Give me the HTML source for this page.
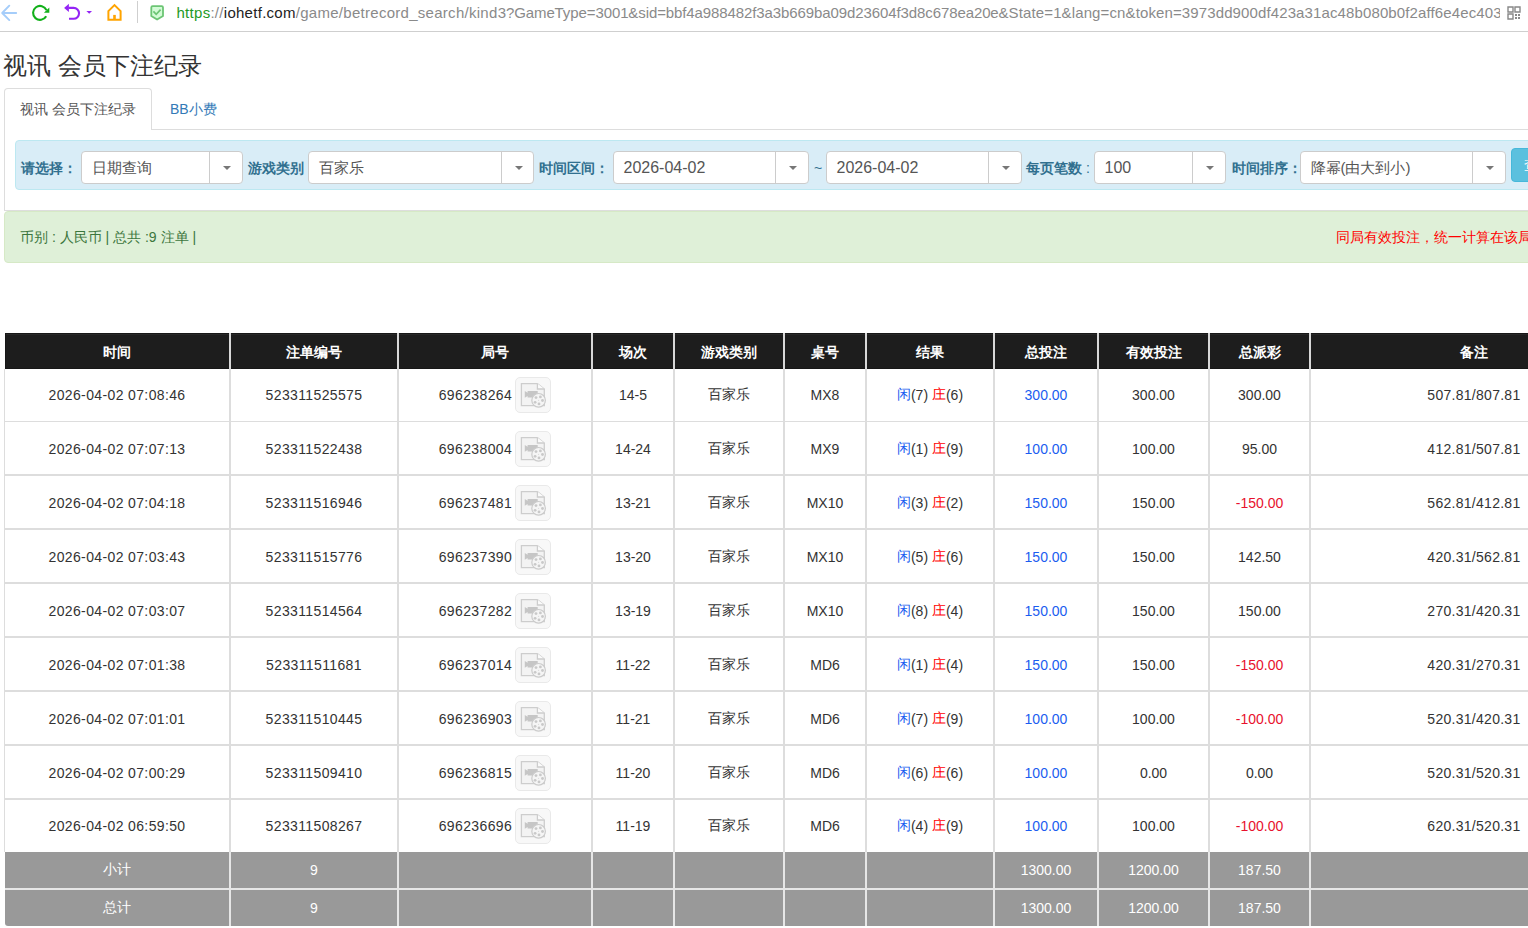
<!DOCTYPE html>
<html><head><meta charset="utf-8"><style>
*{margin:0;padding:0;box-sizing:border-box}
html,body{width:1528px;height:928px;overflow:hidden;background:#fff;font-family:"Liberation Sans",sans-serif;color:#333}
.a{position:absolute;white-space:nowrap}
.c{position:absolute;display:flex;align-items:center;font-size:14px;color:#333;white-space:nowrap}
.hd{color:#fff;font-weight:bold}
.num{letter-spacing:0.37px}
.sel{position:absolute;top:151px;height:33px;background:#fff;border:1px solid #ccc;border-radius:4px}
.sel .t{position:absolute;left:9.5px;top:0;height:31px;line-height:31px;font-size:16px;color:#555;white-space:nowrap}
.sel .sp{position:absolute;top:0;bottom:0;width:1px;background:#ccc}
.sel .cr{position:absolute;top:14px;width:0;height:0;border-left:4px solid transparent;border-right:4px solid transparent;border-top:4px solid #777}
.lb{position:absolute;top:158px;font-size:14px;font-weight:bold;color:#31708f;white-space:nowrap;line-height:20px}
.vl{position:absolute;width:2px;background:#ddd}
.hl{position:absolute;height:2px;background:#ddd}
.blue{color:#1b5df0}
.red{color:#f00}
.dred{color:#e8112d}
</style></head><body>

<div class="a" style="left:0;top:31px;width:1528px;height:1px;background:#cfcfcf"></div>
<svg class="a" style="left:0;top:0" width="175" height="31" viewBox="0 0 175 31">
 <path d="M16.2 13H2.4M9.3 5.7L2.2 13L9.3 20.1" fill="none" stroke="#a5cdfa" stroke-width="1.9" stroke-linecap="round" stroke-linejoin="round"/>
 <path d="M46.2 16.3A7 7 0 1 1 46.5 10.1" fill="none" stroke="#12b01a" stroke-width="2.1"/>
 <path d="M43.9 12.7H49.3V7.5Z" fill="#12b01a"/>
 <path d="M68.5 7.9H73.6A5.45 5.45 0 0 1 73.6 18.8H69" fill="none" stroke="#9424f5" stroke-width="2.1"/>
 <path d="M64.1 7.9L68.9 3.8V12Z" fill="#9424f5"/>
 <path d="M86.4 10.9H92L89.2 13.8Z" fill="#9424f5"/>
 <path d="M108.4 19.7V11.1L114.5 5.1L120.6 11.1V19.7Z" fill="none" stroke="#ffa400" stroke-width="2" stroke-linejoin="miter"/>
 <rect x="113.2" y="14.9" width="2.6" height="5" fill="#ffa400"/>
 <rect x="137" y="1" width="1" height="22" fill="#cfcfcf"/>
 <path d="M151.3 7.5Q151.3 6.2 152.6 6.2H161.7Q163 6.2 163 7.5V15.9L157.1 19.6L151.3 15.9Z" fill="#d3fbd6" stroke="#6cc574" stroke-width="1.8" stroke-linejoin="round"/>
 <path d="M153.4 11.3L156.2 14.3L160.6 9.6" fill="none" stroke="#6cc574" stroke-width="1.7"/>
</svg>
<div class="a" style="left:0;top:3px;width:1500px;height:22px;overflow:hidden;font-size:15px;line-height:20px;color:#8a8a8a"><span class="a" style="left:176.5px;top:0;letter-spacing:0.28px"><span style="color:#1f9a26">https</span>://<span style="color:#222">iohetf.com</span>/game/betrecord_search/kind</span><span class="a" style="left:497.7px;top:0;letter-spacing:-0.1px">3?GameType=3001&amp;sid=bbf4a988482f3a3b669ba09d23604f3d8c678ea20e</span><span class="a" style="left:998.5px;top:0;letter-spacing:0.12px">&amp;State=1&amp;lang=cn&amp;token=3973dd900df423a31ac48b080b0f2aff6e4ec403</span></div>
<svg class="a" style="left:1507px;top:6px" width="14" height="14" viewBox="0 0 14 14"><path d="M1 1h5v5h-5zM8 1h5v5h-5zM1 8h5v5h-5z" fill="none" stroke="#888" stroke-width="1.4"/><rect x="8" y="8" width="2" height="2" fill="#888"/><rect x="11" y="11" width="2" height="2" fill="#888"/><rect x="11" y="8" width="2" height="2" fill="#888"/><rect x="8" y="11" width="2" height="2" fill="#888"/></svg>

<div class="a" style="left:3px;top:49.5px;font-size:24px;line-height:32px;color:#333">视讯 会员下注纪录</div>
<div class="a" style="left:4px;top:88px;width:148px;height:42px;border:1px solid #ddd;border-bottom:none;border-radius:4px 4px 0 0;background:#fff"></div>
<div class="a" style="left:152px;top:129px;width:1376px;height:1px;background:#ddd"></div>
<div class="a" style="left:20px;top:99px;font-size:14px;line-height:20px;color:#555">视讯 会员下注纪录</div>
<div class="a" style="left:170px;top:99px;font-size:14px;line-height:20px;color:#337ab7">BB小费</div>
<div class="a" style="left:4px;top:130px;width:1px;height:81px;background:#ddd"></div>
<div class="a" style="left:4px;top:210px;width:1524px;height:1px;background:#ddd"></div>

<div class="a" style="left:15px;top:140px;width:1560px;height:50px;background:#d9edf7;border:1px solid #bce8f1;border-radius:4px"></div>
<div class="lb" style="left:21px">请选择：</div>
<div class="lb" style="left:248px">游戏类别</div>
<div class="lb" style="left:539px">时间区间：</div>
<div class="lb" style="left:1026px">每页笔数<span style="font-weight:normal"> :</span></div>
<div class="lb" style="left:1232px">时间排序：</div>
<div class="a" style="left:814px;top:158px;font-size:14px;line-height:20px;color:#31708f">~</div>
<div class="sel" style="left:81px;width:162px"><div class="t" style="font-size:15px">日期查询</div><div class="sp" style="left:127px"></div><div class="cr" style="left:141.0px"></div></div>
<div class="sel" style="left:308px;width:226px"><div class="t" style="font-size:15px">百家乐</div><div class="sp" style="left:192px"></div><div class="cr" style="left:205.5px"></div></div>
<div class="sel" style="left:613px;width:196px"><div class="t" style="font-size:16px">2026-04-02</div><div class="sp" style="left:161px"></div><div class="cr" style="left:175.0px"></div></div>
<div class="sel" style="left:826px;width:196px"><div class="t" style="font-size:16px">2026-04-02</div><div class="sp" style="left:161px"></div><div class="cr" style="left:175.0px"></div></div>
<div class="sel" style="left:1094px;width:132px"><div class="t" style="font-size:16px">100</div><div class="sp" style="left:97px"></div><div class="cr" style="left:111.0px"></div></div>
<div class="sel" style="left:1300px;width:206px"><div class="t" style="font-size:15px">降幂(由大到小)</div><div class="sp" style="left:171px"></div><div class="cr" style="left:185.0px"></div></div>
<div class="a" style="left:1511px;top:148px;width:60px;height:34px;background:#5bc0de;border:1px solid #46b8da;border-radius:4px"><span style="position:absolute;left:12px;top:6px;font-size:14px;line-height:20px;color:#fff">查询</span></div>
<div class="a" style="left:4px;top:211px;width:1560px;height:52px;background:#dff0d8;border:1px solid #d6e9c6;border-radius:4px"></div>
<div class="a" style="left:20px;top:227px;font-size:14px;line-height:20px;color:#3c763d">币别 : 人民币 | 总共 :9 注单 |</div>
<div class="a" style="left:1336px;top:227px;font-size:14px;line-height:20px;color:#f00">同局有效投注，统一计算在该局</div>
<div class="a" style="left:5px;top:333px;width:1600px;height:36px;background:#1d1d1d;box-shadow:inset 0 1px 0 #171717,inset 1px 0 0 #171717,inset 0 -1px 0 #171717,inset 0 2px 0 #282828"></div>
<div class="c hd" style="left:5px;top:334.5px;width:224px;height:36px;justify-content:center">时间</div>
<div class="c hd" style="left:231px;top:334.5px;width:166px;height:36px;justify-content:center">注单编号</div>
<div class="c hd" style="left:399px;top:334.5px;width:192px;height:36px;justify-content:center">局号</div>
<div class="c hd" style="left:593px;top:334.5px;width:80px;height:36px;justify-content:center">场次</div>
<div class="c hd" style="left:675px;top:334.5px;width:108px;height:36px;justify-content:center">游戏类别</div>
<div class="c hd" style="left:785px;top:334.5px;width:80px;height:36px;justify-content:center">桌号</div>
<div class="c hd" style="left:867px;top:334.5px;width:126px;height:36px;justify-content:center">结果</div>
<div class="c hd" style="left:995px;top:334.5px;width:102px;height:36px;justify-content:center">总投注</div>
<div class="c hd" style="left:1099px;top:334.5px;width:109px;height:36px;justify-content:center">有效投注</div>
<div class="c hd" style="left:1210px;top:334.5px;width:99px;height:36px;justify-content:center">总派彩</div>
<div class="c hd" style="left:1311px;top:334.5px;width:325px;height:36px;justify-content:center">备注</div>
<div class="vl" style="left:229px;top:333px;height:36px;background:#d8d8d8"></div>
<div class="vl" style="left:397px;top:333px;height:36px;background:#d8d8d8"></div>
<div class="vl" style="left:591px;top:333px;height:36px;background:#d8d8d8"></div>
<div class="vl" style="left:673px;top:333px;height:36px;background:#d8d8d8"></div>
<div class="vl" style="left:783px;top:333px;height:36px;background:#d8d8d8"></div>
<div class="vl" style="left:865px;top:333px;height:36px;background:#d8d8d8"></div>
<div class="vl" style="left:993px;top:333px;height:36px;background:#d8d8d8"></div>
<div class="vl" style="left:1097px;top:333px;height:36px;background:#d8d8d8"></div>
<div class="vl" style="left:1208px;top:333px;height:36px;background:#d8d8d8"></div>
<div class="vl" style="left:1309px;top:333px;height:36px;background:#d8d8d8"></div>
<div class="c " style="left:5px;top:369px;width:224px;height:52px;justify-content:center"><span class="num">2026-04-02 07:08:46</span></div>
<div class="c " style="left:231px;top:369px;width:166px;height:52px;justify-content:center"><span class="num">523311525575</span></div>
<div class="c " style="left:399px;top:369px;width:192px;height:52px;justify-content:center"><span class="num" style="margin-right:3.2px">696238264</span><svg width="36" height="36" viewBox="0 0 36 36" style="flex:none"><rect x="0.5" y="0.5" width="35" height="35" rx="4.5" fill="#f8f8f8" stroke="#e9e9e9"/><path d="M6.4 6.6H22.4L29.3 12V28.6H6.4Z" fill="#f3f3f3" stroke="#cdcdcd" stroke-width="1.3"/><path d="M22.4 6.6V12H29.3" fill="#fbfbfb" stroke="#cdcdcd" stroke-width="1.3"/><path d="M9.8 14L12.6 15.7V14H22.7V20.5H12.6V18.9L9.8 20.7Z" fill="#c6c6c6"/><circle cx="23.6" cy="23.3" r="6.8" fill="#f5f5f5" stroke="#cbcbcb" stroke-width="1.2"/><circle cx="21" cy="20.6" r="1.4" fill="#c9c9c9"/><circle cx="25.4" cy="19.9" r="1.4" fill="#c9c9c9"/><circle cx="27.5" cy="23.5" r="1.4" fill="#c9c9c9"/><circle cx="24" cy="26.9" r="1.4" fill="#c9c9c9"/><circle cx="20.1" cy="25.3" r="1.4" fill="#c9c9c9"/><circle cx="23.6" cy="23.3" r="0.5" fill="#d0d0d0"/></svg></div>
<div class="c " style="left:593px;top:369px;width:80px;height:52px;justify-content:center">14-5</div>
<div class="c " style="left:675px;top:369px;width:108px;height:52px;justify-content:center">百家乐</div>
<div class="c " style="left:785px;top:369px;width:80px;height:52px;justify-content:center">MX8</div>
<div class="c " style="left:867px;top:369px;width:126px;height:52px;justify-content:center"><span class="blue">闲</span>(7)&nbsp;<span class="red">庄</span>(6)</div>
<div class="c " style="left:995px;top:369px;width:102px;height:52px;justify-content:center"><span class="blue">300.00</span></div>
<div class="c " style="left:1099px;top:369px;width:109px;height:52px;justify-content:center">300.00</div>
<div class="c " style="left:1210px;top:369px;width:99px;height:52px;justify-content:center"><span class="">300.00</span></div>
<div class="c" style="left:1311px;top:369px;width:209.5px;height:52px;justify-content:flex-end"><span style="letter-spacing:0.28px">507.81/807.81</span></div>
<div class="c " style="left:5px;top:422px;width:224px;height:53px;justify-content:center"><span class="num">2026-04-02 07:07:13</span></div>
<div class="c " style="left:231px;top:422px;width:166px;height:53px;justify-content:center"><span class="num">523311522438</span></div>
<div class="c " style="left:399px;top:422px;width:192px;height:53px;justify-content:center"><span class="num" style="margin-right:3.2px">696238004</span><svg width="36" height="36" viewBox="0 0 36 36" style="flex:none"><rect x="0.5" y="0.5" width="35" height="35" rx="4.5" fill="#f8f8f8" stroke="#e9e9e9"/><path d="M6.4 6.6H22.4L29.3 12V28.6H6.4Z" fill="#f3f3f3" stroke="#cdcdcd" stroke-width="1.3"/><path d="M22.4 6.6V12H29.3" fill="#fbfbfb" stroke="#cdcdcd" stroke-width="1.3"/><path d="M9.8 14L12.6 15.7V14H22.7V20.5H12.6V18.9L9.8 20.7Z" fill="#c6c6c6"/><circle cx="23.6" cy="23.3" r="6.8" fill="#f5f5f5" stroke="#cbcbcb" stroke-width="1.2"/><circle cx="21" cy="20.6" r="1.4" fill="#c9c9c9"/><circle cx="25.4" cy="19.9" r="1.4" fill="#c9c9c9"/><circle cx="27.5" cy="23.5" r="1.4" fill="#c9c9c9"/><circle cx="24" cy="26.9" r="1.4" fill="#c9c9c9"/><circle cx="20.1" cy="25.3" r="1.4" fill="#c9c9c9"/><circle cx="23.6" cy="23.3" r="0.5" fill="#d0d0d0"/></svg></div>
<div class="c " style="left:593px;top:422px;width:80px;height:53px;justify-content:center">14-24</div>
<div class="c " style="left:675px;top:422px;width:108px;height:53px;justify-content:center">百家乐</div>
<div class="c " style="left:785px;top:422px;width:80px;height:53px;justify-content:center">MX9</div>
<div class="c " style="left:867px;top:422px;width:126px;height:53px;justify-content:center"><span class="blue">闲</span>(1)&nbsp;<span class="red">庄</span>(9)</div>
<div class="c " style="left:995px;top:422px;width:102px;height:53px;justify-content:center"><span class="blue">100.00</span></div>
<div class="c " style="left:1099px;top:422px;width:109px;height:53px;justify-content:center">100.00</div>
<div class="c " style="left:1210px;top:422px;width:99px;height:53px;justify-content:center"><span class="">95.00</span></div>
<div class="c" style="left:1311px;top:422px;width:209.5px;height:53px;justify-content:flex-end"><span style="letter-spacing:0.28px">412.81/507.81</span></div>
<div class="c " style="left:5px;top:476px;width:224px;height:53px;justify-content:center"><span class="num">2026-04-02 07:04:18</span></div>
<div class="c " style="left:231px;top:476px;width:166px;height:53px;justify-content:center"><span class="num">523311516946</span></div>
<div class="c " style="left:399px;top:476px;width:192px;height:53px;justify-content:center"><span class="num" style="margin-right:3.2px">696237481</span><svg width="36" height="36" viewBox="0 0 36 36" style="flex:none"><rect x="0.5" y="0.5" width="35" height="35" rx="4.5" fill="#f8f8f8" stroke="#e9e9e9"/><path d="M6.4 6.6H22.4L29.3 12V28.6H6.4Z" fill="#f3f3f3" stroke="#cdcdcd" stroke-width="1.3"/><path d="M22.4 6.6V12H29.3" fill="#fbfbfb" stroke="#cdcdcd" stroke-width="1.3"/><path d="M9.8 14L12.6 15.7V14H22.7V20.5H12.6V18.9L9.8 20.7Z" fill="#c6c6c6"/><circle cx="23.6" cy="23.3" r="6.8" fill="#f5f5f5" stroke="#cbcbcb" stroke-width="1.2"/><circle cx="21" cy="20.6" r="1.4" fill="#c9c9c9"/><circle cx="25.4" cy="19.9" r="1.4" fill="#c9c9c9"/><circle cx="27.5" cy="23.5" r="1.4" fill="#c9c9c9"/><circle cx="24" cy="26.9" r="1.4" fill="#c9c9c9"/><circle cx="20.1" cy="25.3" r="1.4" fill="#c9c9c9"/><circle cx="23.6" cy="23.3" r="0.5" fill="#d0d0d0"/></svg></div>
<div class="c " style="left:593px;top:476px;width:80px;height:53px;justify-content:center">13-21</div>
<div class="c " style="left:675px;top:476px;width:108px;height:53px;justify-content:center">百家乐</div>
<div class="c " style="left:785px;top:476px;width:80px;height:53px;justify-content:center">MX10</div>
<div class="c " style="left:867px;top:476px;width:126px;height:53px;justify-content:center"><span class="blue">闲</span>(3)&nbsp;<span class="red">庄</span>(2)</div>
<div class="c " style="left:995px;top:476px;width:102px;height:53px;justify-content:center"><span class="blue">150.00</span></div>
<div class="c " style="left:1099px;top:476px;width:109px;height:53px;justify-content:center">150.00</div>
<div class="c " style="left:1210px;top:476px;width:99px;height:53px;justify-content:center"><span class="dred">-150.00</span></div>
<div class="c" style="left:1311px;top:476px;width:209.5px;height:53px;justify-content:flex-end"><span style="letter-spacing:0.28px">562.81/412.81</span></div>
<div class="c " style="left:5px;top:530px;width:224px;height:53px;justify-content:center"><span class="num">2026-04-02 07:03:43</span></div>
<div class="c " style="left:231px;top:530px;width:166px;height:53px;justify-content:center"><span class="num">523311515776</span></div>
<div class="c " style="left:399px;top:530px;width:192px;height:53px;justify-content:center"><span class="num" style="margin-right:3.2px">696237390</span><svg width="36" height="36" viewBox="0 0 36 36" style="flex:none"><rect x="0.5" y="0.5" width="35" height="35" rx="4.5" fill="#f8f8f8" stroke="#e9e9e9"/><path d="M6.4 6.6H22.4L29.3 12V28.6H6.4Z" fill="#f3f3f3" stroke="#cdcdcd" stroke-width="1.3"/><path d="M22.4 6.6V12H29.3" fill="#fbfbfb" stroke="#cdcdcd" stroke-width="1.3"/><path d="M9.8 14L12.6 15.7V14H22.7V20.5H12.6V18.9L9.8 20.7Z" fill="#c6c6c6"/><circle cx="23.6" cy="23.3" r="6.8" fill="#f5f5f5" stroke="#cbcbcb" stroke-width="1.2"/><circle cx="21" cy="20.6" r="1.4" fill="#c9c9c9"/><circle cx="25.4" cy="19.9" r="1.4" fill="#c9c9c9"/><circle cx="27.5" cy="23.5" r="1.4" fill="#c9c9c9"/><circle cx="24" cy="26.9" r="1.4" fill="#c9c9c9"/><circle cx="20.1" cy="25.3" r="1.4" fill="#c9c9c9"/><circle cx="23.6" cy="23.3" r="0.5" fill="#d0d0d0"/></svg></div>
<div class="c " style="left:593px;top:530px;width:80px;height:53px;justify-content:center">13-20</div>
<div class="c " style="left:675px;top:530px;width:108px;height:53px;justify-content:center">百家乐</div>
<div class="c " style="left:785px;top:530px;width:80px;height:53px;justify-content:center">MX10</div>
<div class="c " style="left:867px;top:530px;width:126px;height:53px;justify-content:center"><span class="blue">闲</span>(5)&nbsp;<span class="red">庄</span>(6)</div>
<div class="c " style="left:995px;top:530px;width:102px;height:53px;justify-content:center"><span class="blue">150.00</span></div>
<div class="c " style="left:1099px;top:530px;width:109px;height:53px;justify-content:center">150.00</div>
<div class="c " style="left:1210px;top:530px;width:99px;height:53px;justify-content:center"><span class="">142.50</span></div>
<div class="c" style="left:1311px;top:530px;width:209.5px;height:53px;justify-content:flex-end"><span style="letter-spacing:0.28px">420.31/562.81</span></div>
<div class="c " style="left:5px;top:584px;width:224px;height:53px;justify-content:center"><span class="num">2026-04-02 07:03:07</span></div>
<div class="c " style="left:231px;top:584px;width:166px;height:53px;justify-content:center"><span class="num">523311514564</span></div>
<div class="c " style="left:399px;top:584px;width:192px;height:53px;justify-content:center"><span class="num" style="margin-right:3.2px">696237282</span><svg width="36" height="36" viewBox="0 0 36 36" style="flex:none"><rect x="0.5" y="0.5" width="35" height="35" rx="4.5" fill="#f8f8f8" stroke="#e9e9e9"/><path d="M6.4 6.6H22.4L29.3 12V28.6H6.4Z" fill="#f3f3f3" stroke="#cdcdcd" stroke-width="1.3"/><path d="M22.4 6.6V12H29.3" fill="#fbfbfb" stroke="#cdcdcd" stroke-width="1.3"/><path d="M9.8 14L12.6 15.7V14H22.7V20.5H12.6V18.9L9.8 20.7Z" fill="#c6c6c6"/><circle cx="23.6" cy="23.3" r="6.8" fill="#f5f5f5" stroke="#cbcbcb" stroke-width="1.2"/><circle cx="21" cy="20.6" r="1.4" fill="#c9c9c9"/><circle cx="25.4" cy="19.9" r="1.4" fill="#c9c9c9"/><circle cx="27.5" cy="23.5" r="1.4" fill="#c9c9c9"/><circle cx="24" cy="26.9" r="1.4" fill="#c9c9c9"/><circle cx="20.1" cy="25.3" r="1.4" fill="#c9c9c9"/><circle cx="23.6" cy="23.3" r="0.5" fill="#d0d0d0"/></svg></div>
<div class="c " style="left:593px;top:584px;width:80px;height:53px;justify-content:center">13-19</div>
<div class="c " style="left:675px;top:584px;width:108px;height:53px;justify-content:center">百家乐</div>
<div class="c " style="left:785px;top:584px;width:80px;height:53px;justify-content:center">MX10</div>
<div class="c " style="left:867px;top:584px;width:126px;height:53px;justify-content:center"><span class="blue">闲</span>(8)&nbsp;<span class="red">庄</span>(4)</div>
<div class="c " style="left:995px;top:584px;width:102px;height:53px;justify-content:center"><span class="blue">150.00</span></div>
<div class="c " style="left:1099px;top:584px;width:109px;height:53px;justify-content:center">150.00</div>
<div class="c " style="left:1210px;top:584px;width:99px;height:53px;justify-content:center"><span class="">150.00</span></div>
<div class="c" style="left:1311px;top:584px;width:209.5px;height:53px;justify-content:flex-end"><span style="letter-spacing:0.28px">270.31/420.31</span></div>
<div class="c " style="left:5px;top:638px;width:224px;height:53px;justify-content:center"><span class="num">2026-04-02 07:01:38</span></div>
<div class="c " style="left:231px;top:638px;width:166px;height:53px;justify-content:center"><span class="num">523311511681</span></div>
<div class="c " style="left:399px;top:638px;width:192px;height:53px;justify-content:center"><span class="num" style="margin-right:3.2px">696237014</span><svg width="36" height="36" viewBox="0 0 36 36" style="flex:none"><rect x="0.5" y="0.5" width="35" height="35" rx="4.5" fill="#f8f8f8" stroke="#e9e9e9"/><path d="M6.4 6.6H22.4L29.3 12V28.6H6.4Z" fill="#f3f3f3" stroke="#cdcdcd" stroke-width="1.3"/><path d="M22.4 6.6V12H29.3" fill="#fbfbfb" stroke="#cdcdcd" stroke-width="1.3"/><path d="M9.8 14L12.6 15.7V14H22.7V20.5H12.6V18.9L9.8 20.7Z" fill="#c6c6c6"/><circle cx="23.6" cy="23.3" r="6.8" fill="#f5f5f5" stroke="#cbcbcb" stroke-width="1.2"/><circle cx="21" cy="20.6" r="1.4" fill="#c9c9c9"/><circle cx="25.4" cy="19.9" r="1.4" fill="#c9c9c9"/><circle cx="27.5" cy="23.5" r="1.4" fill="#c9c9c9"/><circle cx="24" cy="26.9" r="1.4" fill="#c9c9c9"/><circle cx="20.1" cy="25.3" r="1.4" fill="#c9c9c9"/><circle cx="23.6" cy="23.3" r="0.5" fill="#d0d0d0"/></svg></div>
<div class="c " style="left:593px;top:638px;width:80px;height:53px;justify-content:center">11-22</div>
<div class="c " style="left:675px;top:638px;width:108px;height:53px;justify-content:center">百家乐</div>
<div class="c " style="left:785px;top:638px;width:80px;height:53px;justify-content:center">MD6</div>
<div class="c " style="left:867px;top:638px;width:126px;height:53px;justify-content:center"><span class="blue">闲</span>(1)&nbsp;<span class="red">庄</span>(4)</div>
<div class="c " style="left:995px;top:638px;width:102px;height:53px;justify-content:center"><span class="blue">150.00</span></div>
<div class="c " style="left:1099px;top:638px;width:109px;height:53px;justify-content:center">150.00</div>
<div class="c " style="left:1210px;top:638px;width:99px;height:53px;justify-content:center"><span class="dred">-150.00</span></div>
<div class="c" style="left:1311px;top:638px;width:209.5px;height:53px;justify-content:flex-end"><span style="letter-spacing:0.28px">420.31/270.31</span></div>
<div class="c " style="left:5px;top:692px;width:224px;height:53px;justify-content:center"><span class="num">2026-04-02 07:01:01</span></div>
<div class="c " style="left:231px;top:692px;width:166px;height:53px;justify-content:center"><span class="num">523311510445</span></div>
<div class="c " style="left:399px;top:692px;width:192px;height:53px;justify-content:center"><span class="num" style="margin-right:3.2px">696236903</span><svg width="36" height="36" viewBox="0 0 36 36" style="flex:none"><rect x="0.5" y="0.5" width="35" height="35" rx="4.5" fill="#f8f8f8" stroke="#e9e9e9"/><path d="M6.4 6.6H22.4L29.3 12V28.6H6.4Z" fill="#f3f3f3" stroke="#cdcdcd" stroke-width="1.3"/><path d="M22.4 6.6V12H29.3" fill="#fbfbfb" stroke="#cdcdcd" stroke-width="1.3"/><path d="M9.8 14L12.6 15.7V14H22.7V20.5H12.6V18.9L9.8 20.7Z" fill="#c6c6c6"/><circle cx="23.6" cy="23.3" r="6.8" fill="#f5f5f5" stroke="#cbcbcb" stroke-width="1.2"/><circle cx="21" cy="20.6" r="1.4" fill="#c9c9c9"/><circle cx="25.4" cy="19.9" r="1.4" fill="#c9c9c9"/><circle cx="27.5" cy="23.5" r="1.4" fill="#c9c9c9"/><circle cx="24" cy="26.9" r="1.4" fill="#c9c9c9"/><circle cx="20.1" cy="25.3" r="1.4" fill="#c9c9c9"/><circle cx="23.6" cy="23.3" r="0.5" fill="#d0d0d0"/></svg></div>
<div class="c " style="left:593px;top:692px;width:80px;height:53px;justify-content:center">11-21</div>
<div class="c " style="left:675px;top:692px;width:108px;height:53px;justify-content:center">百家乐</div>
<div class="c " style="left:785px;top:692px;width:80px;height:53px;justify-content:center">MD6</div>
<div class="c " style="left:867px;top:692px;width:126px;height:53px;justify-content:center"><span class="blue">闲</span>(7)&nbsp;<span class="red">庄</span>(9)</div>
<div class="c " style="left:995px;top:692px;width:102px;height:53px;justify-content:center"><span class="blue">100.00</span></div>
<div class="c " style="left:1099px;top:692px;width:109px;height:53px;justify-content:center">100.00</div>
<div class="c " style="left:1210px;top:692px;width:99px;height:53px;justify-content:center"><span class="dred">-100.00</span></div>
<div class="c" style="left:1311px;top:692px;width:209.5px;height:53px;justify-content:flex-end"><span style="letter-spacing:0.28px">520.31/420.31</span></div>
<div class="c " style="left:5px;top:746px;width:224px;height:53px;justify-content:center"><span class="num">2026-04-02 07:00:29</span></div>
<div class="c " style="left:231px;top:746px;width:166px;height:53px;justify-content:center"><span class="num">523311509410</span></div>
<div class="c " style="left:399px;top:746px;width:192px;height:53px;justify-content:center"><span class="num" style="margin-right:3.2px">696236815</span><svg width="36" height="36" viewBox="0 0 36 36" style="flex:none"><rect x="0.5" y="0.5" width="35" height="35" rx="4.5" fill="#f8f8f8" stroke="#e9e9e9"/><path d="M6.4 6.6H22.4L29.3 12V28.6H6.4Z" fill="#f3f3f3" stroke="#cdcdcd" stroke-width="1.3"/><path d="M22.4 6.6V12H29.3" fill="#fbfbfb" stroke="#cdcdcd" stroke-width="1.3"/><path d="M9.8 14L12.6 15.7V14H22.7V20.5H12.6V18.9L9.8 20.7Z" fill="#c6c6c6"/><circle cx="23.6" cy="23.3" r="6.8" fill="#f5f5f5" stroke="#cbcbcb" stroke-width="1.2"/><circle cx="21" cy="20.6" r="1.4" fill="#c9c9c9"/><circle cx="25.4" cy="19.9" r="1.4" fill="#c9c9c9"/><circle cx="27.5" cy="23.5" r="1.4" fill="#c9c9c9"/><circle cx="24" cy="26.9" r="1.4" fill="#c9c9c9"/><circle cx="20.1" cy="25.3" r="1.4" fill="#c9c9c9"/><circle cx="23.6" cy="23.3" r="0.5" fill="#d0d0d0"/></svg></div>
<div class="c " style="left:593px;top:746px;width:80px;height:53px;justify-content:center">11-20</div>
<div class="c " style="left:675px;top:746px;width:108px;height:53px;justify-content:center">百家乐</div>
<div class="c " style="left:785px;top:746px;width:80px;height:53px;justify-content:center">MD6</div>
<div class="c " style="left:867px;top:746px;width:126px;height:53px;justify-content:center"><span class="blue">闲</span>(6)&nbsp;<span class="red">庄</span>(6)</div>
<div class="c " style="left:995px;top:746px;width:102px;height:53px;justify-content:center"><span class="blue">100.00</span></div>
<div class="c " style="left:1099px;top:746px;width:109px;height:53px;justify-content:center">0.00</div>
<div class="c " style="left:1210px;top:746px;width:99px;height:53px;justify-content:center"><span class="">0.00</span></div>
<div class="c" style="left:1311px;top:746px;width:209.5px;height:53px;justify-content:flex-end"><span style="letter-spacing:0.28px">520.31/520.31</span></div>
<div class="c " style="left:5px;top:800px;width:224px;height:52px;justify-content:center"><span class="num">2026-04-02 06:59:50</span></div>
<div class="c " style="left:231px;top:800px;width:166px;height:52px;justify-content:center"><span class="num">523311508267</span></div>
<div class="c " style="left:399px;top:800px;width:192px;height:52px;justify-content:center"><span class="num" style="margin-right:3.2px">696236696</span><svg width="36" height="36" viewBox="0 0 36 36" style="flex:none"><rect x="0.5" y="0.5" width="35" height="35" rx="4.5" fill="#f8f8f8" stroke="#e9e9e9"/><path d="M6.4 6.6H22.4L29.3 12V28.6H6.4Z" fill="#f3f3f3" stroke="#cdcdcd" stroke-width="1.3"/><path d="M22.4 6.6V12H29.3" fill="#fbfbfb" stroke="#cdcdcd" stroke-width="1.3"/><path d="M9.8 14L12.6 15.7V14H22.7V20.5H12.6V18.9L9.8 20.7Z" fill="#c6c6c6"/><circle cx="23.6" cy="23.3" r="6.8" fill="#f5f5f5" stroke="#cbcbcb" stroke-width="1.2"/><circle cx="21" cy="20.6" r="1.4" fill="#c9c9c9"/><circle cx="25.4" cy="19.9" r="1.4" fill="#c9c9c9"/><circle cx="27.5" cy="23.5" r="1.4" fill="#c9c9c9"/><circle cx="24" cy="26.9" r="1.4" fill="#c9c9c9"/><circle cx="20.1" cy="25.3" r="1.4" fill="#c9c9c9"/><circle cx="23.6" cy="23.3" r="0.5" fill="#d0d0d0"/></svg></div>
<div class="c " style="left:593px;top:800px;width:80px;height:52px;justify-content:center">11-19</div>
<div class="c " style="left:675px;top:800px;width:108px;height:52px;justify-content:center">百家乐</div>
<div class="c " style="left:785px;top:800px;width:80px;height:52px;justify-content:center">MD6</div>
<div class="c " style="left:867px;top:800px;width:126px;height:52px;justify-content:center"><span class="blue">闲</span>(4)&nbsp;<span class="red">庄</span>(9)</div>
<div class="c " style="left:995px;top:800px;width:102px;height:52px;justify-content:center"><span class="blue">100.00</span></div>
<div class="c " style="left:1099px;top:800px;width:109px;height:52px;justify-content:center">100.00</div>
<div class="c " style="left:1210px;top:800px;width:99px;height:52px;justify-content:center"><span class="dred">-100.00</span></div>
<div class="c" style="left:1311px;top:800px;width:209.5px;height:52px;justify-content:flex-end"><span style="letter-spacing:0.28px">620.31/520.31</span></div>
<div class="hl" style="left:5px;top:421px;width:1523px;height:1px"></div>
<div class="hl" style="left:5px;top:474px;width:1523px"></div>
<div class="hl" style="left:5px;top:528px;width:1523px"></div>
<div class="hl" style="left:5px;top:582px;width:1523px"></div>
<div class="hl" style="left:5px;top:636px;width:1523px"></div>
<div class="hl" style="left:5px;top:690px;width:1523px"></div>
<div class="hl" style="left:5px;top:744px;width:1523px"></div>
<div class="hl" style="left:5px;top:798px;width:1523px"></div>
<div class="vl" style="left:4px;top:369px;height:483px;width:1px"></div>
<div class="vl" style="left:229px;top:369px;height:483px"></div>
<div class="vl" style="left:397px;top:369px;height:483px"></div>
<div class="vl" style="left:591px;top:369px;height:483px"></div>
<div class="vl" style="left:673px;top:369px;height:483px"></div>
<div class="vl" style="left:783px;top:369px;height:483px"></div>
<div class="vl" style="left:865px;top:369px;height:483px"></div>
<div class="vl" style="left:993px;top:369px;height:483px"></div>
<div class="vl" style="left:1097px;top:369px;height:483px"></div>
<div class="vl" style="left:1208px;top:369px;height:483px"></div>
<div class="vl" style="left:1309px;top:369px;height:483px"></div>
<div class="a" style="left:5px;top:852px;width:1600px;height:74px;background:#999;border-radius:0 0 0 3px"></div>
<div class="vl" style="left:229px;top:852px;height:74px;background:#e6e6e6"></div>
<div class="vl" style="left:397px;top:852px;height:74px;background:#e6e6e6"></div>
<div class="vl" style="left:591px;top:852px;height:74px;background:#e6e6e6"></div>
<div class="vl" style="left:673px;top:852px;height:74px;background:#e6e6e6"></div>
<div class="vl" style="left:783px;top:852px;height:74px;background:#e6e6e6"></div>
<div class="vl" style="left:865px;top:852px;height:74px;background:#e6e6e6"></div>
<div class="vl" style="left:993px;top:852px;height:74px;background:#e6e6e6"></div>
<div class="vl" style="left:1097px;top:852px;height:74px;background:#e6e6e6"></div>
<div class="vl" style="left:1208px;top:852px;height:74px;background:#e6e6e6"></div>
<div class="vl" style="left:1309px;top:852px;height:74px;background:#e6e6e6"></div>
<div class="hl" style="left:5px;top:888px;width:1523px;background:#e6e6e6"></div>
<div class="c sm" style="left:5px;top:852px;width:224px;height:36px;justify-content:center">小计</div>
<div class="c sm" style="left:231px;top:852px;width:166px;height:36px;justify-content:center">9</div>
<div class="c sm" style="left:995px;top:852px;width:102px;height:36px;justify-content:center">1300.00</div>
<div class="c sm" style="left:1099px;top:852px;width:109px;height:36px;justify-content:center">1200.00</div>
<div class="c sm" style="left:1210px;top:852px;width:99px;height:36px;justify-content:center">187.50</div>
<div class="c sm" style="left:5px;top:890px;width:224px;height:36px;justify-content:center">总计</div>
<div class="c sm" style="left:231px;top:890px;width:166px;height:36px;justify-content:center">9</div>
<div class="c sm" style="left:995px;top:890px;width:102px;height:36px;justify-content:center">1300.00</div>
<div class="c sm" style="left:1099px;top:890px;width:109px;height:36px;justify-content:center">1200.00</div>
<div class="c sm" style="left:1210px;top:890px;width:99px;height:36px;justify-content:center">187.50</div>
<style>.sm{color:#fff}</style>
</body></html>
